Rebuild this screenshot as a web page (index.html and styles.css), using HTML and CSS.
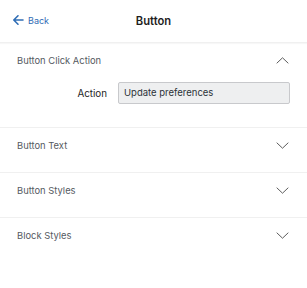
FILE: index.html
```html
<!DOCTYPE html>
<html>
<head>
<meta charset="utf-8">
<link rel="stylesheet" href="styles.css">
</head>
<body>
<header class="topbar">
  <a class="back">
    <svg class="back-icon" width="12" height="12" viewBox="0 0 12 12"><path d="M11 6H2M6 1.8L1.8 6 6 10.2" fill="none" stroke="#2f6db5" stroke-width="1.6" stroke-linecap="round" stroke-linejoin="round"/></svg>
    <span>Back</span>
  </a>
  <h1 class="title">Button</h1>
</header>
<section class="panel">
  <div class="panel-head">
    <span class="panel-title">Button Click Action</span>
    <svg class="chev" width="13" height="7" viewBox="0 0 13 7"><path d="M0.7 6.3L6.5 0.8 12.3 6.3" fill="none" stroke="#5c5c5c" stroke-width="1"/></svg>
  </div>
  <div class="panel-body">
    <div class="field">
      <label class="field-label">Action</label>
      <div class="field-input">Update preferences</div>
    </div>
  </div>
</section>
<section class="panel">
  <div class="panel-head">
    <span class="panel-title">Button Text</span>
    <svg class="chev" width="13" height="7" viewBox="0 0 13 7"><path d="M0.7 0.7L6.5 6.2 12.3 0.7" fill="none" stroke="#5c5c5c" stroke-width="1"/></svg>
  </div>
</section>
<section class="panel">
  <div class="panel-head">
    <span class="panel-title">Button Styles</span>
    <svg class="chev" width="13" height="7" viewBox="0 0 13 7"><path d="M0.7 0.7L6.5 6.2 12.3 0.7" fill="none" stroke="#5c5c5c" stroke-width="1"/></svg>
  </div>
</section>
<section class="panel last">
  <div class="panel-head">
    <span class="panel-title">Block Styles</span>
    <svg class="chev" width="13" height="7" viewBox="0 0 13 7"><path d="M0.7 0.7L6.5 6.2 12.3 0.7" fill="none" stroke="#5c5c5c" stroke-width="1"/></svg>
  </div>
</section>
</body>
</html>
```
FILE: styles.css
```css
html, body {
  margin: 0;
  padding: 0;
  background: #fff;
  font-family: Inter, "Liberation Sans", sans-serif;
}
.topbar {
  position: relative;
  height: 42px;
  display: flex;
  align-items: center;
  justify-content: center;
  border-bottom: 1px solid #f0f0f0;
  box-shadow: 0 1px 1px rgba(0,0,0,0.03);
}
.back {
  position: absolute;
  left: 12px;
  top: 14px;
  display: flex;
  align-items: center;
  gap: 4px;
  color: #2f6db5;
  font-size: 9px;
}
.back-icon { display: block; }
.title {
  margin: 0;
  font-size: 11.2px;
  font-weight: 600;
  color: #1e1e1e;
}
.panel {
  border-bottom: 1px solid #f0f0f0;
  padding-bottom: 10px;
}
.panel.last { border-bottom: none; }
.panel-head {
  height: 34px;
  display: flex;
  align-items: center;
  justify-content: space-between;
  padding: 0 18px 0 17px;
}
.panel-title {
  font-size: 9.4px;
  color: #555a5f;
}
.chev { display: block; }
.panel-body {
  padding: 5px 17px 13px 0;
}
.field {
  display: flex;
  align-items: center;
  gap: 11px;
}
.field-label {
  width: 107px;
  text-align: right;
  font-size: 9.8px;
  color: #1e1e1e;
}
.field-input {
  flex: 1;
  height: 20px;
  line-height: 20px;
  padding: 0 5px;
  background: #eeeff0;
  border: 1px solid #c8c9cc;
  border-radius: 2px;
  font-size: 9.5px;
  color: #2c3338;
}
```
